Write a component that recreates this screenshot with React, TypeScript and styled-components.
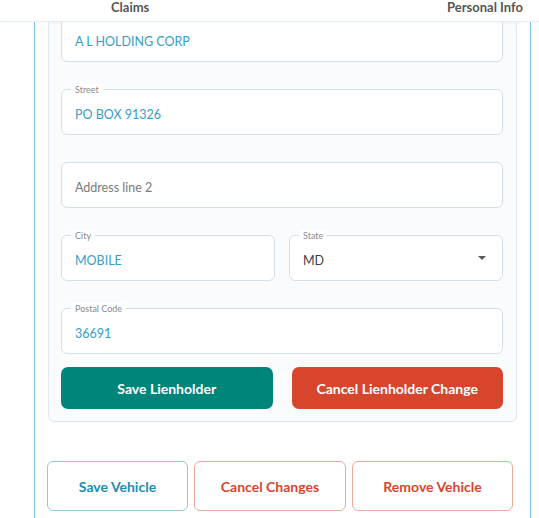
import * as React from 'react';
import styled, { createGlobalStyle } from 'styled-components';

const GlobalStyle = createGlobalStyle`
  html, body {
    margin: 0;
    padding: 0;
    background: #ffffff;
  }
  body {
    font-family: Lato, "Open Sans", Arial, sans-serif;
    overflow: hidden;
  }
`;

const Page = styled.div`
  width: 539px;
  height: 518px;
  display: flex;
  flex-direction: column;
  overflow: hidden;
`;

const TabBar = styled.div`
  height: 22px;
  flex: none;
  box-sizing: border-box;
  display: flex;
  align-items: flex-start;
  justify-content: space-between;
  padding: 1px 16px 0 111px;
  border-bottom: 1px solid #e4ecf1;
  box-shadow: 0 1px 2px rgba(120, 150, 170, 0.08);
  position: relative;
  z-index: 2;
  background: #fff;
`;

const Tab = styled.span`
  font-size: 13px;
  font-weight: 700;
  color: #565656;
  line-height: 12px;
`;

const Panel = styled.div`
  flex: 1;
  margin: 0 8px 0 34px;
  border-left: 1px solid #7cc6dd;
  border-right: 1px solid #7cc6dd;
  overflow: hidden;
  display: flex;
  flex-direction: column;
`;

const Card = styled.div`
  margin: -19px 13px 0 13px;
  padding: 12px 13px 12px 12px;
  background: #f9fbfd;
  border: 1px solid #e1e7ee;
  border-radius: 6px;
  display: flex;
  flex-direction: column;
  gap: 27px;
`;

const Row = styled.div`
  display: grid;
  grid-template-columns: 1fr 1fr;
  gap: 14px;
`;

const Field = styled.div`
  position: relative;
  height: 46px;
  box-sizing: border-box;
  border: 1px solid #d3dfe9;
  border-radius: 6px;
  background: #fff;
  padding: 5px 16px 0 13px;
  display: flex;
  align-items: center;
  justify-content: space-between;
`;

const Label = styled.span`
  position: absolute;
  top: -6px;
  left: 9px;
  padding: 0 4px;
  background: #fff;
  font-size: 9px;
  line-height: 11px;
  color: #8c8c8c;
`;

const Value = styled.span<{ $tone?: 'blue' | 'dark' | 'muted' }>`
  font-size: 12.5px;
  color: ${(p) => (p.$tone === 'dark' ? '#3d3d3d' : p.$tone === 'muted' ? '#7a7a7a' : '#3a9cc4')};
`;

const Caret = styled.span`
  width: 0;
  height: 0;
  border-left: 4px solid transparent;
  border-right: 4px solid transparent;
  border-top: 4px solid #5a5a5a;
  margin-top: -5px;
`;

const ActionRow = styled.div`
  display: grid;
  grid-template-columns: 1fr 1fr;
  gap: 19px;
  margin-top: -14px;
`;

const SolidButton = styled.button<{ $variant: 'teal' | 'red' }>`
  height: 42px;
  border: none;
  border-radius: 7px;
  background: ${(p) => (p.$variant === 'teal' ? '#00857b' : '#d7462c')};
  color: #fff;
  font-family: Lato, "Open Sans", Arial, sans-serif;
  font-size: 14px;
  font-weight: 700;
`;

const Footer = styled.div`
  display: grid;
  grid-template-columns: 141px 152px 161px;
  gap: 6px;
  padding: 39px 0 0 12px;
`;

const OutlineButton = styled.button<{ $variant: 'blue' | 'red' }>`
  height: 50px;
  background: #fff;
  border-radius: 6px;
  border: 1.5px solid ${(p) => (p.$variant === 'blue' ? '#90c9dc' : '#eba99b')};
  color: ${(p) => (p.$variant === 'blue' ? '#1e8bb6' : '#d7462c')};
  font-family: Lato, "Open Sans", Arial, sans-serif;
  font-size: 14px;
  font-weight: 700;
`;

const InputField = ({
  label, value, tone, select,
}: { label?: string; value: string; tone?: 'blue' | 'dark' | 'muted'; select?: boolean }) => (
  <Field>
    {label ? <Label>{label}</Label> : null}
    <Value $tone={tone}>{value}</Value>
    {select ? <Caret /> : null}
  </Field>
);

const App = () => (
  <Page>
    <GlobalStyle />
    <TabBar>
      <Tab>Claims</Tab>
      <Tab>Personal Info</Tab>
    </TabBar>
    <Panel>
      <Card>
        <InputField value="A L HOLDING CORP" />
        <InputField label="Street" value="PO BOX 91326" />
        <InputField value="Address line 2" tone="muted" />
        <Row>
          <InputField label="City" value="MOBILE" />
          <InputField label="State" value="MD" tone="dark" select />
        </Row>
        <InputField label="Postal Code" value="36691" />
        <ActionRow>
          <SolidButton $variant="teal">Save Lienholder</SolidButton>
          <SolidButton $variant="red">Cancel Lienholder Change</SolidButton>
        </ActionRow>
      </Card>
      <Footer>
        <OutlineButton $variant="blue">Save Vehicle</OutlineButton>
        <OutlineButton $variant="red">Cancel Changes</OutlineButton>
        <OutlineButton $variant="red">Remove Vehicle</OutlineButton>
      </Footer>
    </Panel>
  </Page>
);

export default App;
